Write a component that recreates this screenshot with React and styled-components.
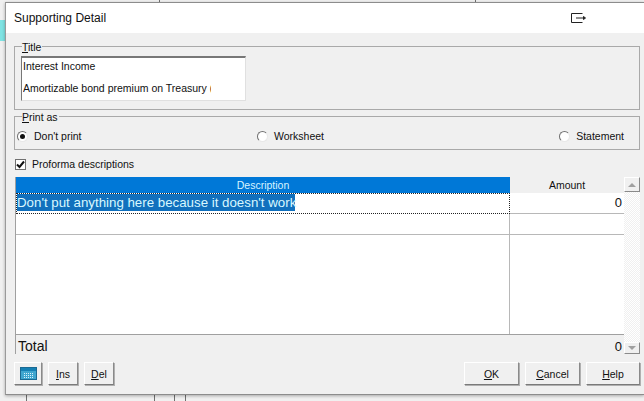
import React from 'react'
import styled, { createGlobalStyle } from 'styled-components'

const GlobalStyle = createGlobalStyle`
  html, body {
    margin: 0;
    padding: 0;
    background: #f0f0f0;
    overflow: hidden;
  }
  * { box-sizing: border-box; }
`

const Desktop = styled.div`
  position: relative;
  width: 644px;
  height: 401px;
  overflow: hidden;
  background: #f0f0f0;
  font-family: "Liberation Sans", Arial, sans-serif;
  font-size: 10.5px;
  color: #111;
`
const BackLine = styled.div`
  position: absolute;
  background: #6f6f6f;
  left: ${p => p.$x}px;
  top: ${p => p.$y}px;
  width: 1px;
  height: ${p => p.$h}px;
`
const Teal = styled.div`
  position: absolute;
  left: 0;
  top: 20px;
  width: 5px;
  height: 21px;
  background: #7fe3e3;
`
const Dialog = styled.div`
  position: absolute;
  left: 5px;
  top: 2px;
  width: 639px;
  height: 393px;
  background: #f0f0f0;
  border-top: 1px solid #8c8c8c;
  border-left: 1px solid #9a9a9a;
  border-bottom: 1px solid #8c8c8c;
  box-shadow: 0 1px 3px rgba(0, 0, 0, .3);
  display: flex;
  flex-direction: column;
`
const TitleBar = styled.div`
  height: 30px;
  flex: none;
  background: #fff;
  display: flex;
  align-items: center;
  justify-content: space-between;
  padding: 0 58px 0 8px;
  font-size: 12px;
`
const Body = styled.div`
  flex: 1;
  display: flex;
  flex-direction: column;
  padding: 13px 4px 0 8px;
`
const Group = styled.div`
  height: ${p => p.$h}px;
  margin-bottom: ${p => p.$mb || 0}px;
  flex: none;
  border: 1px solid #a9a9a9;
  position: relative;
`
const GroupLabel = styled.span`
  position: absolute;
  left: 7px;
  top: -6px;
  background: #f0f0f0;
  padding-right: 1px;
  line-height: 13px;
`
const Key = styled.span`
  text-decoration: underline;
`
const TitleBox = styled.div`
  margin: 9px 0 0 6px;
  width: 225px;
  height: 45px;
  background: #fff;
  border-top: 2px solid #777;
  border-left: 1px solid #777;
  border-right: 1px solid #e0e0e0;
  border-bottom: 1px solid #e0e0e0;
  padding-left: 1px;
  overflow: hidden;
`
const TitleLine = styled.div`
  width: 188px;
  line-height: 16px;
  margin-bottom: 6px;
  white-space: nowrap;
  overflow: hidden;
`
const RadioRow = styled.div`
  display: grid;
  grid-template-columns: 240px 1fr auto;
  align-items: center;
  height: 100%;
  padding: 6px 15px 0 2px;
`
const RadioItem = styled.label`
  display: flex;
  align-items: center;
  gap: 6px;
`
const RadioDot = styled.span`
  width: 11px;
  height: 11px;
  border-radius: 50%;
  background: #fff;
  border: 1px solid;
  border-color: #707070 #e8e8e8 #e8e8e8 #707070;
  display: flex;
  align-items: center;
  justify-content: center;
  &::after {
    content: '';
    width: 5px;
    height: 5px;
    border-radius: 50%;
    background: ${p => (p.$on ? '#111' : 'transparent')};
  }
`
const CheckRow = styled.div`
  display: flex;
  align-items: center;
  gap: 6px;
  height: 14px;
  margin: 7px 0 6px 1px;
  flex: none;
`
const CheckBox = styled.span`
  width: 11px;
  height: 11px;
  background: #fff;
  border: 1px solid #707070;
  display: flex;
  align-items: center;
  justify-content: center;
`
const GridFrame = styled.div`
  height: 177px;
  flex: none;
  margin-left: 1px;
  border-left: 1px solid #a0a0a0;
  display: grid;
  grid-template-columns: 1fr 16px;
`
const GridMain = styled.div`
  display: flex;
  flex-direction: column;
  min-width: 0;
`
const GridHead = styled.div`
  display: grid;
  grid-template-columns: 494px 1fr;
  height: 16px;
  flex: none;
`
const DescHead = styled.div`
  background: #0078d7;
  color: #d8f4ff;
  text-align: center;
  line-height: 16px;
`
const AmountHead = styled.div`
  text-align: center;
  line-height: 16px;
  border-bottom: 1px solid #a0a0a0;
`
const Rows = styled.div`
  height: 142px;
  flex: none;
  background: #fff;
  display: flex;
  flex-direction: column;
  border-bottom: 1px solid #a0a0a0;
`
const Row = styled.div`
  display: grid;
  grid-template-columns: 494px 1fr;
  height: ${p => (p.$grow ? 'auto' : '21px')};
  flex: ${p => (p.$grow ? 1 : 'none')};
  border-bottom: ${p => (p.$grow ? 'none' : '1px solid #b8b8b8')};
`
const Cell = styled.div`
  border-right: 1px solid #b8b8b8;
`
const ActiveCell = styled.div`
  height: 21px;
  border: 1px dotted #222;
  background: #fff;
  font-size: 13.3px;
  white-space: nowrap;
`
const Selected = styled.div`
  background: #1170bd;
  color: #d9f8ff;
  height: 17px;
  line-height: 17px;
  width: 278px;
`
const AmountCell = styled.div`
  text-align: right;
  padding-right: 2px;
  font-size: 13px;
  line-height: 20px;
`
const TotalRow = styled.div`
  flex: 1;
  display: flex;
  align-items: center;
  justify-content: space-between;
  font-size: 14px;
  padding: 3px 2px 0 2px;
`
const TotalValue = styled.span`
  font-size: 13px;
`
const ScrollBar = styled.div`
  display: flex;
  flex-direction: column;
`
const ScrollBtn = styled.div`
  flex: none;
  height: ${p => p.$h}px;
  background: #f0f0f0;
  border: 1px solid;
  border-color: #fff #8a8a8a #8a8a8a #fff;
  display: flex;
  align-items: center;
  justify-content: center;
  &::after {
    content: '';
    border-left: 4px solid transparent;
    border-right: 4px solid transparent;
    ${p => (p.$down ? 'border-top' : 'border-bottom')}: 4px solid #a0a0a0;
  }
`
const ScrollTrack = styled.div`
  flex: 1;
  background: repeating-conic-gradient(#f0f0f0 0 25%, #fff 0 50%) 0 0 / 2px 2px;
`
const Footer = styled.div`
  display: flex;
  align-items: flex-start;
  gap: 6px;
  padding-top: 8px;
`
const Btn = styled.button`
  width: ${p => p.$w}px;
  height: 23px;
  margin: 0;
  padding: 0;
  background: #f0f0f0;
  font: inherit;
  color: #111;
  border: 1px solid;
  border-color: #fff #8a8a8a #7a7a7a #fff;
  box-shadow: 1px 1px 0 #b0b0b0;
  display: flex;
  align-items: center;
  justify-content: center;
`
const Spacer = styled.div`
  flex: 1;
`

const ExitIcon = () => (
  <svg width="15" height="10" viewBox="0 0 15 10" fill="none" stroke="#222" strokeWidth="1">
    <path d="M11.5 .5H.5V9.5H11.5M5 5H13" />
    <path d="M12.5 3.5V6.5L14.5 5Z" fill="#222" />
  </svg>
)

const CheckMark = () => (
  <svg width="9" height="9" viewBox="0 0 9 9" fill="none" stroke="#111" strokeWidth="2">
    <path d="M1 4.5L3.5 7L8 1.5" />
  </svg>
)

const CalcIcon = () => (
  <svg width="17" height="13" viewBox="0 0 17 13">
    <rect x="0.5" y="0.5" width="16" height="12" fill="#3fa6cf" stroke="#1a6a94" />
    <rect x="1" y="1" width="15" height="3" fill="#1580b4" />
    <path d="M4 6.5H13M4 8.5H13M4 10.5H13" stroke="#d8f1fa" strokeDasharray="1 1" />
  </svg>
)

export default function App() {
  return (
    <Desktop>
      <GlobalStyle />
      <BackLine $x={159} $y={0} $h={2} />
      <BackLine $x={475} $y={0} $h={2} />
      <Teal />
      <BackLine $x={26} $y={395} $h={6} />
      <BackLine $x={154} $y={395} $h={6} />
      <BackLine $x={174} $y={395} $h={6} />
      <BackLine $x={185} $y={395} $h={6} />
      <Dialog>
        <TitleBar>
          <span>Supporting Detail</span>
          <ExitIcon />
        </TitleBar>
        <Body>
          <Group $h={64} $mb={6}>
            <GroupLabel><Key>T</Key>itle</GroupLabel>
            <TitleBox>
              <TitleLine>Interest Income</TitleLine>
              <TitleLine>Amortizable bond premium on Treasury (</TitleLine>
            </TitleBox>
          </Group>
          <Group $h={34}>
            <GroupLabel><Key>P</Key>rint as</GroupLabel>
            <RadioRow>
              <RadioItem><RadioDot $on />Don't print</RadioItem>
              <RadioItem><RadioDot />Worksheet</RadioItem>
              <RadioItem><RadioDot />Statement</RadioItem>
            </RadioRow>
          </Group>
          <CheckRow>
            <CheckBox><CheckMark /></CheckBox>
            Proforma descriptions
          </CheckRow>
          <GridFrame>
            <GridMain>
              <GridHead>
                <DescHead>Description</DescHead>
                <AmountHead>Amount</AmountHead>
              </GridHead>
              <Rows>
                <Row>
                  <ActiveCell><Selected>Don't put anything here because it doesn't work</Selected></ActiveCell>
                  <AmountCell>0</AmountCell>
                </Row>
                <Row><Cell /><div /></Row>
                <Row $grow><Cell /><div /></Row>
              </Rows>
              <TotalRow>
                Total
                <TotalValue>0</TotalValue>
              </TotalRow>
            </GridMain>
            <ScrollBar>
              <ScrollBtn $h={15} />
              <ScrollTrack />
              <ScrollBtn $h={12} $down />
            </ScrollBar>
          </GridFrame>
          <Footer>
            <Btn $w={28}><CalcIcon /></Btn>
            <Btn $w={30}><span><Key>I</Key>ns</span></Btn>
            <Btn $w={30}><span><Key>D</Key>el</span></Btn>
            <Spacer />
            <Btn $w={55}><span><Key>O</Key>K</span></Btn>
            <Btn $w={55}><span><Key>C</Key>ancel</span></Btn>
            <Btn $w={54}><span><Key>H</Key>elp</span></Btn>
          </Footer>
        </Body>
      </Dialog>
    </Desktop>
  )
}
